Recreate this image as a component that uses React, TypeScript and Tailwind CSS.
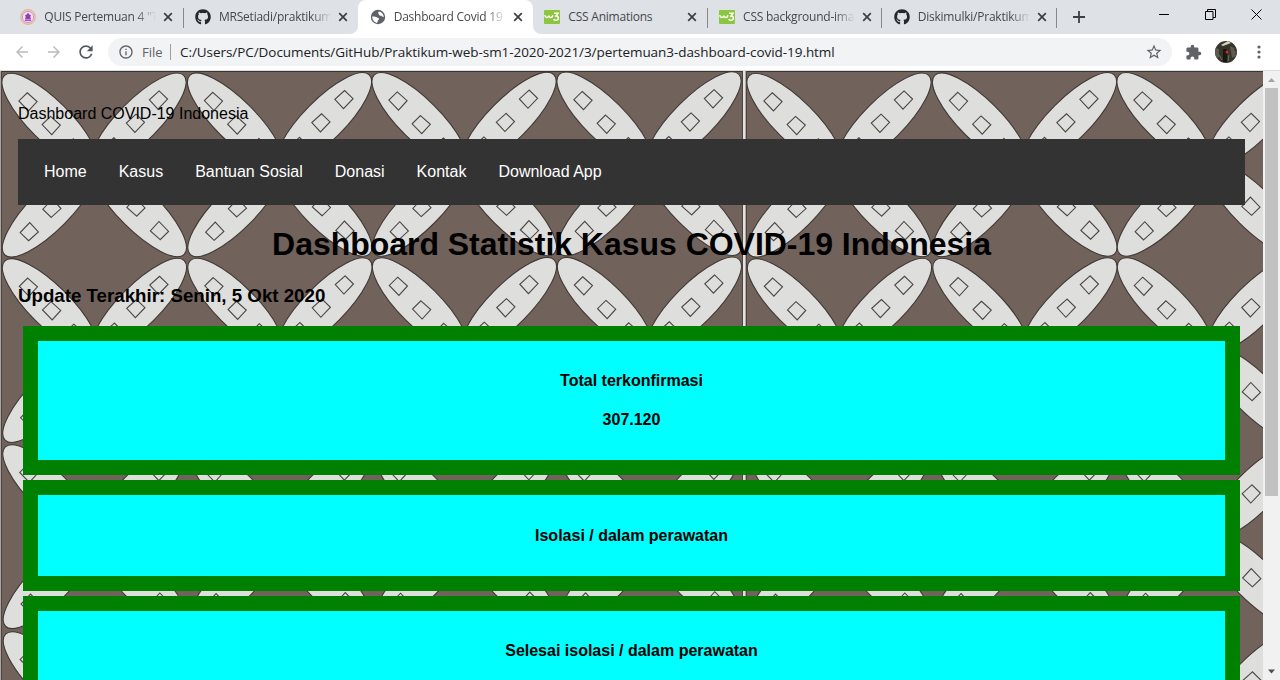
import type { ReactNode } from "react";
import { FaGithub } from "react-icons/fa";
import { MdExtension, MdStarBorder, MdRefresh, MdArrowBack, MdArrowForward, MdInfoOutline } from "react-icons/md";

const uiFont = "font-['Open_Sans','Noto_Sans',sans-serif]";

function Seal() {
  return (
    <svg viewBox="0 0 16 16" className="size-4">
      <circle cx="8" cy="8" r="7.3" fill="#e9d3ea" stroke="#e5b878" strokeWidth="1.2" />
      <circle cx="8" cy="8" r="5.600" fill="#f4e6f8" stroke="#cf8fd8" strokeWidth="1" />
      <path d="M8 3.800l1.700 2 1.300.3-.7 1.800.8 2.600H4.900l.8-2.600L5 6.100l1.300-.3z" fill="#9a3ab0" />
      <path d="M5 11.500h6" stroke="#a64bb8" strokeWidth="1" />
    </svg>
  );
}

function Globe() {
  return (
    <svg viewBox="0 0 16 16" className="size-4">
      <circle cx="8" cy="8" r="7.200" fill="#5f6368" />
      <path d="M9.300 2.600c2.500.6 4.300 2.700 4.500 5.200-.9.500-1.800-.1-2.200-1-.7-.3-1.700.1-2.400-.6-.4-.8-.2-1.400-.9-1.800-.4-.8.200-1.500 1-1.800z" fill="#fff" />
      <path d="M2.200 7.600c1.500-.2 3.400-.2 4.600.7.900.7 2 .6 2.300 1.500.1.900-1 1.200-1.200 2-.2.900-.6 1.500-.9 2.100-2.700-.4-4.900-3-4.800-6.300z" fill="#fff" />
    </svg>
  );
}

function W3() {
  return (
    <svg viewBox="0 0 16 16" className="size-4">
      <rect y="1" width="16" height="14" rx="1" fill="#8bc63e" />
      <path d="M.8 6.200c.3 2.800 3.200 3 4 .4.400 2.500 3.400 2.500 4.200-.4" fill="none" stroke="#fff" strokeWidth="1.500" />
      <path d="M10 4.200h4L12 7c3.300-.2 3 4.600-.2 4.300-1 0-1.700-.6-2-1.400" fill="none" stroke="#fff" strokeWidth="1.500" />
    </svg>
  );
}

function CloseIcon() {
  return (
    <svg viewBox="0 0 10 10" className="size-2.5">
      <path d="M1.200 1.200l7.600 7.600M8.800 1.200L1.200 8.800" stroke="#3c4043" strokeWidth="1.700" />
    </svg>
  );
}

type TabProps = { icon: ReactNode; title: string; active?: boolean; line?: boolean; fade?: boolean };

function Tab({ icon, title, active, line, fade }: TabProps) {
  return (
    <div className={`relative flex h-[34px] w-[174.700px] shrink-0 items-center pl-[11.300px] ${active ? "rounded-t-lg bg-white" : ""}`}>
      {active && (
        <>
          <svg viewBox="0 0 8 8" className="absolute bottom-0 -left-2 size-2"><path d="M8 0v8H0a8 8 0 0 0 8-8" fill="#fff" /></svg>
          <svg viewBox="0 0 8 8" className="absolute -right-2 bottom-0 size-2"><path d="M0 0v8h8a8 8 0 0 1-8-8" fill="#fff" /></svg>
        </>
      )}
      <span className="flex size-4 shrink-0 items-center justify-center">{icon}</span>
      <span className={`ml-2 w-[112px] shrink-0 text-[12px] leading-4 tracking-[-0.230px] whitespace-nowrap text-[#45494d] ${fade ? "[mask-image:linear-gradient(to_right,black_82%,transparent)]" : ""}`}>
        {title}
      </span>
      <span className="ml-[7px]"><CloseIcon /></span>
      {line && <span className="absolute top-2 right-0 h-5 w-px bg-[#85888c]" />}
    </div>
  );
}

function TabStrip() {
  return (
    <div className="flex h-[34px] bg-[#dee1e6] pl-[9px]">
      <Tab icon={<Seal />} title={'QUIS Pertemuan 4 "T'} line fade />
      <Tab icon={<FaGithub className="size-4 text-[#24292e]" />} title="MRSetiadi/praktikum" fade />
      <Tab icon={<Globe />} title="Dashboard Covid 19" active fade />
      <Tab icon={<W3 />} title="CSS Animations" line />
      <Tab icon={<W3 />} title="CSS background-ima" line fade />
      <Tab icon={<FaGithub className="size-4 text-[#24292e]" />} title="Diskimulki/Praktikum" line fade />
      <div className="flex flex-1 items-center pl-[16px]">
        <svg viewBox="0 0 12 12" className="size-3"><path d="M6 0v12M0 6h12" stroke="#3c4043" strokeWidth="1.800" /></svg>
      </div>
      <div className="flex h-7 items-center gap-[35px] pr-[18px]">
        <svg viewBox="0 0 11 11" className="size-[11px]"><path d="M0 5.500h10" stroke="#000" /></svg>
        <svg viewBox="0 0 11 11" className="size-[11px]"><path d="M.5 2.500h7.500v8H.5zM2.500 2.500v-2h8v8H8" fill="none" stroke="#000" /></svg>
        <svg viewBox="0 0 11 11" className="size-[11px]"><path d="M.5.5l10 10M10.500.5l-10 10" stroke="#000" /></svg>
      </div>
    </div>
  );
}

function Toolbar() {
  return (
    <div className="flex h-9 items-center bg-white pl-[13px]">
      <MdArrowBack className="size-[18px] text-[#babcbe]" />
      <MdArrowForward className="ml-[14px] size-[18px] text-[#babcbe]" />
      <MdRefresh className="ml-[13px] size-5 text-[#54585d]" />
      <div className="ml-3 flex h-7 w-[1064px] items-center rounded-full bg-[#f1f3f4] pl-[10px]">
        <MdInfoOutline className="size-4 text-[#5f6368]" />
        <span className="ml-2 w-[21px] pt-px text-[13px] text-[#5f6368]">File</span>
        <span className="ml-[7px] h-4 w-px bg-[#9aa0a6]" />
        <span className="ml-[9px] flex-1 text-[13.500px] tracking-[-0.060px] whitespace-nowrap text-[#202124]">
          C:/Users/PC/Documents/GitHub/Praktikum-web-sm1-2020-2021/3/pertemuan3-dashboard-covid-19.html
        </span>
        <MdStarBorder className="mr-[9px] size-[18px] text-[#5f6368]" />
      </div>
      <MdExtension className="ml-[13px] size-[17px] text-[#5f6368]" />
      <svg viewBox="0 0 22 22" className="ml-[13px] size-[22px]">
        <defs><clipPath id="avatar"><circle cx="11" cy="11" r="11" /></clipPath></defs>
        <g clipPath="url(#avatar)">
          <rect width="22" height="22" fill="#35352c" />
          <path d="M6 4l7-4 3 2-8 3z" fill="#d8d2bd" />
          <path d="M0 7l4 1v8l-4 2zM15 5l4 2 2 8-4 2z" fill="#5c5c4f" />
          <path d="M8 8h4v13H8z" fill="#171813" />
          <path d="M4 14l3 5M14 14l-1 6" stroke="#74705d" />
          <circle cx="12" cy="11" r="1.500" fill="#d92525" />
          <circle cx="21" cy="11" r="1" fill="#bd3030" />
        </g>
      </svg>
      <svg viewBox="0 0 4 14" className="ml-[20px] h-[14px] w-1" fill="#5f6368">
        <circle cx="2" cy="2" r="1.600" /><circle cx="2" cy="7" r="1.600" /><circle cx="2" cy="12" r="1.600" />
      </svg>
    </div>
  );
}

const columns = [1.5, 187, 371.500, 556.500];
const rows = [1.500, 186.800, 373, 560];

type Point = [number, number];
const topLeft: Point[] = [[26.5, 29.3], [49.7, 53], [72.5, 75.500]];
const topRight: Point[] = [[28.2, 27.8], [51.3, 51], [73.5, 74.500]];
const bottomLeft: Point[] = [[27.5, 26.2], [50.2, 49.5], [73, 72.5]];
const bottomRight: Point[] = [[27.5, 27], [51, 50.5], [74, 73.5]];

type PetalProps = { x: number; y: number; sx: number; sy: number; gems: Point[] };

function Petal({ x, y, sx, sy, gems }: PetalProps) {
  return (
    <g transform={`translate(${x} ${y}) scale(${sx} ${sy})`}>
      <ellipse cx="48" cy="48.500" rx="64" ry="20.500" transform="rotate(45 48 48.500)" fill="#dededc" stroke="#403a37" strokeWidth="1.100" />
      {gems.map(([cx, cy]) => (
        <path key={cx} d={`M${cx - 0.8} ${cy - 9}l9.800 8.800-8.600 9.400-9.600-10z`} fill="none" stroke="#494644" strokeWidth="1.100" />
      ))}
    </g>
  );
}

function Batik() {
  return (
    <svg viewBox="0 0 1263 609" className="absolute inset-0 h-[609px] w-[1263px]">
      <defs>
        <g id="batik-tile">
          <rect width="745" height="620" fill="#71625b" />
          <g transform="rotate(-0.13)">
            {rows.map((y) => columns.map((x) => (
              <g key={`${x}-${y}`}>
                <Petal x={x} y={y} sx={1} sy={1} gems={topLeft} />
                <Petal x={x + 185} y={y} sx={-1} sy={1} gems={topRight} />
                <Petal x={x} y={y + 185.500} sx={1} sy={-1} gems={bottomLeft} />
                <Petal x={x + 185} y={y + 185.500} sx={-1} sy={-1} gems={bottomRight} />
              </g>
            )))}
          </g>
          <path d="M0 .5h745" stroke="#3b3431" />
          <path d="M1.500 0v620M742.500 0v620" stroke="#4d4440" />
          <path d="M.5 0v620" stroke="#aaa6a4" />
          <path d="M744 0v620" stroke="#e4e2e1" strokeWidth="2" />
        </g>
      </defs>
      <use href="#batik-tile" />
      <use href="#batik-tile" x="745" />
    </svg>
  );
}

function Card({ title, value, pad }: { title: string; value?: string; pad: string }) {
  return (
    <section className={`mx-[5px] mb-[5px] shrink-0 border-[15px] border-[#008000] bg-[#00ffff] text-center text-[16px] leading-[18px] font-bold ${value ? "h-[149px]" : "h-[111px]"} ${pad}`}>
      <h4>{title}</h4>
      {value && <p className="mt-[21px]">{value}</p>}
    </section>
  );
}

const links = ["Home", "Kasus", "Bantuan Sosial", "Donasi", "Kontak", "Download App"];

export default function App() {
  return (
    <div className="flex h-[680px] w-[1280px] flex-col overflow-hidden">
      <header className={`shrink-0 border-b border-[#dadce0] ${uiFont}`}>
        <TabStrip />
        <Toolbar />
      </header>
      <div className="flex min-h-0 flex-1 font-['Liberation_Sans',sans-serif] text-black">
        <div className="relative w-[1263px] overflow-hidden">
          <Batik />
          <main className="relative flex flex-col px-[18px] pt-[34px]">
            <p className="text-[16px] leading-[18px]">Dashboard COVID-19 Indonesia</p>
            <nav className="mt-4 flex h-[66px] gap-8 bg-[#333] pt-6 pl-[26px] text-[16px] leading-[18px] text-white">
              {links.map((l) => <a key={l}>{l}</a>)}
            </nav>
            <h1 className="mt-[21px] text-center text-[32px] leading-9 font-bold tracking-[-0.030px]">Dashboard Statistik Kasus COVID-19 Indonesia</h1>
            <h3 className="mt-[23px] mb-5 text-[18.720px] leading-[21px] font-bold">Update Terakhir: Senin, 5 Okt 2020</h3>
            <Card title="Total terkonfirmasi" value="307.120" pad="pt-[31px]" />
            <Card title="Isolasi / dalam perawatan" pad="pt-8" />
            <Card title="Selesai isolasi / dalam perawatan" pad="pt-[31px]" />
          </main>
        </div>
        <aside className="flex w-[17px] flex-col items-center justify-between bg-[#f1f1f1]">
          <svg viewBox="0 0 17 17" className="size-[17px]"><path d="M5 11l3.500-4 3.500 4z" fill="#a3a3a3" /></svg>
          <div className="mb-auto h-[408px] w-[13px] bg-[#c1c1c1]" />
          <svg viewBox="0 0 17 17" className="size-[17px]"><path d="M5 6.500l3.500 4 3.500-4z" fill="#505050" /></svg>
        </aside>
      </div>
    </div>
  );
}
